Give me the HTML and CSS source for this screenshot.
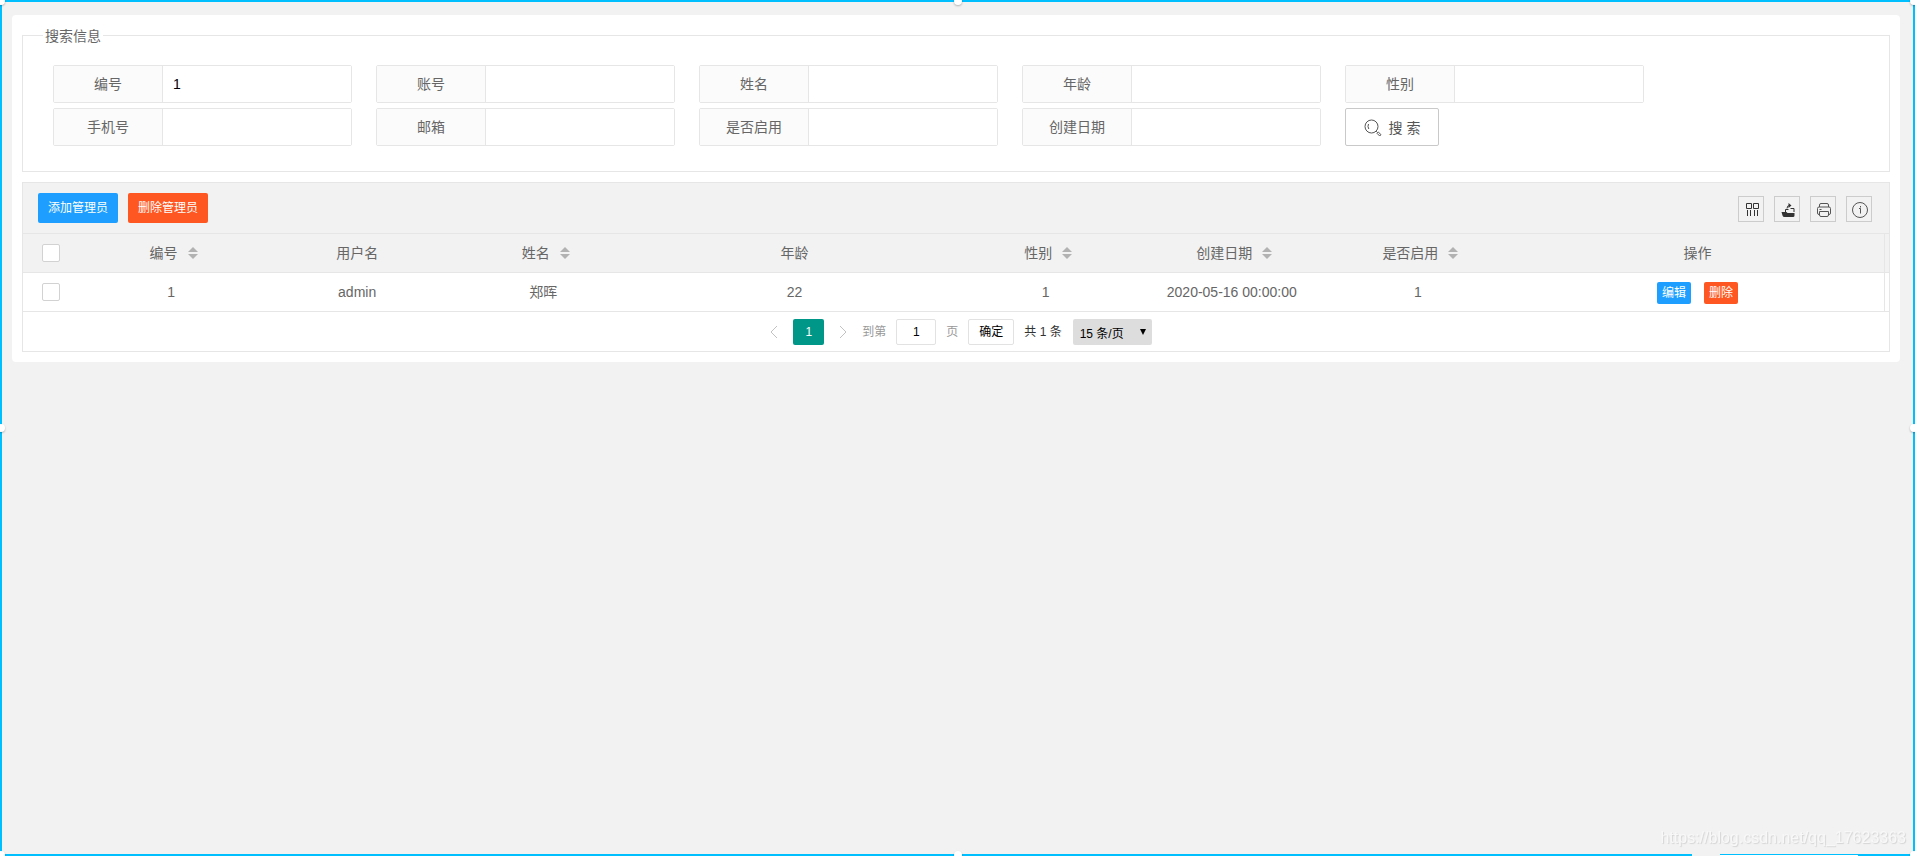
FILE: index.html
```html
<!DOCTYPE html>
<html lang="zh-CN">
<head>
<meta charset="utf-8">
<title>管理员列表</title>
<link rel="stylesheet" href="styles.css">
</head>
<body>
<main class="card">
  <form>
    <fieldset class="search">
      <legend class="search-title">搜索信息</legend>
      <div class="fields">
        <div class="field"><label class="field-label" for="f1">编号</label><input class="field-input" id="f1" type="text" value="1"></div>
        <div class="field"><label class="field-label" for="f2">账号</label><input class="field-input" id="f2" type="text"></div>
        <div class="field"><label class="field-label" for="f3">姓名</label><input class="field-input" id="f3" type="text"></div>
        <div class="field"><label class="field-label" for="f4">年龄</label><input class="field-input" id="f4" type="text"></div>
        <div class="field"><label class="field-label" for="f5">性别</label><input class="field-input" id="f5" type="text"></div>
        <div class="field"><label class="field-label" for="f6">手机号</label><input class="field-input" id="f6" type="text"></div>
        <div class="field"><label class="field-label" for="f7">邮箱</label><input class="field-input" id="f7" type="text"></div>
        <div class="field"><label class="field-label" for="f8">是否启用</label><input class="field-input" id="f8" type="text"></div>
        <div class="field"><label class="field-label" for="f9">创建日期</label><input class="field-input" id="f9" type="text"></div>
        <button class="search-btn" type="button"><svg class="search-icon" viewBox="0 0 18 18"><circle cx="7.5" cy="7.5" r="6.5"/><path d="M4.500 5Q3.300 7.500 4.800 10M12.200 12.200l1.300 1.300M13 14.300l1.300-1.300 2.700 2.700-1.300 1.300z"/></svg>搜 索</button>
      </div>
    </fieldset>
  </form>

  <section class="grid">
    <div class="toolbar">
      <button class="btn blue" type="button">添加管理员</button>
      <button class="btn red" type="button">删除管理员</button>
      <div class="tools">
        <button class="tool" type="button" aria-label="筛选列"><svg class="tool-icon" viewBox="0 0 16 16"><path d="M2.500 1.500h5v5h-5zM9.500 1.500h5v5h-5zM3.500 8v6M6.500 8v6M10.500 8v6M13.500 8v6"/></svg></button>
        <button class="tool" type="button" aria-label="导出"><svg class="tool-icon" viewBox="0 0 16 16"><path d="M5.500 10V7.500h3M10.500 6.500h3.500V10M7 6.500Q7 3.500 9.500 3.500"/><path class="solid" d="M8.500 1l3 2.500-3 2.500zM1.500 10h5l1 1h7v2.500q0 1.500-1.500 1.500H4.500q-1.500 0-2-1.500z"/></svg></button>
        <button class="tool" type="button" aria-label="打印"><svg class="tool-icon thin" viewBox="0 0 16 16"><path d="M3.500 5V3q0-1.500 1.500-1.500h6q1.500 0 1.500 1.500v2M3.500 12.500H3q-1.500 0-1.500-1.500V6.500q0-1.500 1.500-1.500h10q1.500 0 1.500 1.500V11q0 1.500-1.500 1.500h-.5M3.500 9.500h9V13q0 1.500-1.500 1.500H5q-1.500 0-1.500-1.500zM3.500 7.500h2"/></svg></button>
        <button class="tool" type="button" aria-label="提示"><svg class="tool-icon thin" viewBox="0 0 16 16"><circle cx="8" cy="8" r="7.500"/><path d="M7 6.500h1.500v5M8.500 4v1.500"/></svg></button>
      </div>
    </div>
    <div class="table-wrap">
      <table class="table">
        <colgroup><col class="c-check"><col class="c-std"><col class="c-std"><col class="c-std"><col class="c-age"><col class="c-std"><col class="c-std"><col class="c-std"><col></colgroup>
        <thead>
          <tr>
            <th><input class="check" type="checkbox" aria-label="全选"></th>
            <th>编号<span class="sort"></span></th>
            <th>用户名</th>
            <th>姓名<span class="sort"></span></th>
            <th>年龄</th>
            <th>性别<span class="sort"></span></th>
            <th>创建日期<span class="sort"></span></th>
            <th>是否启用<span class="sort"></span></th>
            <th>操作</th>
          </tr>
        </thead>
        <tbody>
          <tr>
            <td><input class="check" type="checkbox" aria-label="选择此行"></td>
            <td>1</td>
            <td>admin</td>
            <td>郑晖</td>
            <td>22</td>
            <td>1</td>
            <td>2020-05-16 00:00:00</td>
            <td>1</td>
            <td><div class="actions"><button class="btn mini blue" type="button">编辑</button><button class="btn mini red" type="button">删除</button></div></td>
          </tr>
        </tbody>
      </table>
    </div>
    <nav class="pager">
      <button class="arrow" type="button" aria-label="上一页"><svg class="arrow-icon" viewBox="0 0 8 14"><path d="M7 1L1 7l6 6"/></svg></button>
      <button class="page" type="button">1</button>
      <button class="arrow next" type="button" aria-label="下一页"><svg class="arrow-icon" viewBox="0 0 8 14"><path d="M1 1l6 6-6 6"/></svg></button>
      <label class="muted" for="goto">到第</label>
      <input class="goto" id="goto" type="text" value="1">
      <span class="muted">页</span>
      <button class="confirm" type="button">确定</button>
      <span class="total">共 1 条</span>
      <span class="limit"><select class="limit-select" aria-label="每页条数"><option>15 条/页</option></select></span>
    </nav>
  </section>
</main>

<div class="frame">
  <i class="handle tl"></i><i class="handle tc"></i><i class="handle tr"></i>
  <i class="handle ml"></i><i class="handle mr"></i>
  <i class="handle bl"></i><i class="handle bc"></i><i class="handle br"></i>
  <i class="gap"></i><i class="gap low"></i>
</div>
<div class="watermark">https://blog.csdn.net/qq_17623363</div>
</body>
</html>
```
FILE: styles.css
```css
* { box-sizing: border-box; }

html { height: 100%; }

body {
  min-height: 100%;
  margin: 0;
  padding: 15px 15px 15px 12px;
  background: #f2f2f2;
  color: #666;
  font: 14px/24px "Liberation Sans", "Noto Sans CJK SC", sans-serif;
}

button, input, select {
  margin: 0;
  padding: 0;
  border: 0;
  font: inherit;
  color: inherit;
}

svg { fill: none; stroke: currentColor; }

.card {
  padding: 10px;
  border-radius: 4px;
  background: #fff;
}

.search {
  min-width: 0;
  margin: 0 0 10px;
  padding: 19px 30px 25px;
  border: 1px solid #e6e6e6;
}

.search-title {
  margin-left: -10px;
  padding: 1px 2px 0;
  line-height: 20px;
}

.fields {
  display: grid;
  grid-template-columns: repeat(auto-fill, 299px);
  gap: 5px 24px;
}

.field {
  display: flex;
  height: 38px;
  border: 1px solid #e6e6e6;
  border-radius: 2px;
}

.field-label {
  flex: none;
  width: 108px;
  background: #fbfbfb;
  line-height: 36px;
  text-align: center;
}

.field-input {
  flex: 1;
  min-width: 0;
  padding-left: 10px;
  border-left: 1px solid #e6e6e6;
  background: #fff;
  color: #000;
}

.search-btn {
  display: flex;
  align-items: center;
  justify-content: center;
  gap: 7px;
  width: 94px;
  height: 38px;
  padding-top: 2px;
  border: 1px solid #c9c9c9;
  border-radius: 2px;
  background: #fff;
  color: #555;
}

.search-icon { width: 18px; height: 18px; }

.grid { border: 1px solid #e6e6e6; }

.toolbar {
  display: flex;
  gap: 10px;
  height: 51px;
  padding: 10px 17px 0 15px;
  border-bottom: 1px solid #e6e6e6;
  background: #f2f2f2;
}

.btn {
  height: 30px;
  padding: 0 10px;
  border-radius: 2px;
  color: #fff;
  font-size: 12px;
  line-height: 30px;
}

.blue { background: #1e9fff; }
.red { background: #ff5722; }

.tools {
  display: flex;
  gap: 10px;
  margin: 3px 0 0 auto;
}

.tool {
  display: flex;
  align-items: center;
  justify-content: center;
  width: 26px;
  height: 26px;
  padding: 2px 0 0 2px;
  border: 1px solid #ccc;
  background: none;
  color: #333;
}

.tool-icon { width: 16px; height: 16px; }
.thin { color: #555; }
.solid { fill: currentColor; stroke: none; }

.table-wrap {
  padding-right: 4px;
  background: linear-gradient(#f2f2f2 38px, #e6e6e6 38px, #e6e6e6 39px, #fff 39px);
  border-bottom: 1px solid #e6e6e6;
}

.table {
  width: 100%;
  table-layout: fixed;
  border-collapse: separate;
  border-spacing: 0;
  border-right: 1px solid #e6e6e6;
}

.c-check { width: 55px; }
.c-std { width: 10%; }
.c-age { width: 17%; }

.table th, .table td {
  height: 38px;
  padding: 0;
  font-weight: 400;
  text-align: center;
}

.table th {
  height: 39px;
  border-bottom: 1px solid #e6e6e6;
}

.check {
  display: block;
  width: 18px;
  height: 18px;
  margin: 0 auto;
  border: 1px solid #d2d2d2;
  border-radius: 2px;
  background: #fff;
  appearance: none;
}

.sort {
  display: inline-grid;
  gap: 2px;
  margin: 0 -5px 2px 10px;
  vertical-align: middle;
}

.sort::before, .sort::after {
  content: "";
  border: 5px solid transparent;
}

.sort::before { border-top: 0; border-bottom-color: #b2b2b2; }
.sort::after { border-bottom: 0; border-top-color: #b2b2b2; }

.actions {
  display: flex;
  justify-content: center;
  gap: 13px;
  padding-top: 1px;
}

.mini {
  height: 22px;
  padding: 0 5px;
  line-height: 22px;
}

.pager {
  display: flex;
  align-items: center;
  justify-content: center;
  height: 39px;
  padding: 0 0 0 10px;
  font-size: 12px;
}

.arrow {
  display: flex;
  width: 8px;
  background: none;
  color: #c2c2c2;
}

.arrow-icon { width: 8px; height: 14px; }

.page {
  width: 31px;
  height: 26px;
  margin: 0 15px;
  border-radius: 2px;
  background: #009688;
  color: #fff;
}

.next { margin-right: 15px; }
.muted { color: #999; }

.goto {
  width: 40px;
  height: 26px;
  margin: 0 10px;
  border: 1px solid #e2e2e2;
  border-radius: 2px;
  color: #000;
  text-align: center;
}

.confirm {
  width: 46px;
  height: 26px;
  margin: 0 10px;
  border: 1px solid #e2e2e2;
  border-radius: 2px;
  background: #fff;
  color: #000;
}

.total { color: #333; }

.limit {
  position: relative;
  margin-left: 11px;
}

.limit::after {
  content: "";
  position: absolute;
  top: 10px;
  right: 6px;
  border: 3px solid transparent;
  border-top: 6px solid #000;
  border-bottom: 0;
  pointer-events: none;
}

.limit-select {
  display: block;
  width: 79px;
  height: 26px;
  padding: 3px 0 0 7px;
  border-radius: 2px;
  background: #ddd;
  color: #000;
  appearance: none;
}

/* Selection outline over the whole window */
.frame {
  position: fixed;
  inset: 0;
  border: 2px solid #00bfff;
  pointer-events: none;
}

.handle {
  position: absolute;
  width: 8px;
  height: 8px;
  border-radius: 50%;
  background: #fff;
  box-shadow: 0 1px 2px #0004;
}

.tl, .tc, .tr { top: -5px; }
.bl, .bc, .br { bottom: -5px; }
.tl, .ml, .bl { left: -5px; }
.tr, .mr, .br { right: -5px; }
.tc, .bc { left: calc(50% - 4px); }
.ml, .mr { top: calc(50% - 4px); }

.gap {
  position: absolute;
  right: 193px;
  bottom: -2px;
  width: 28px;
  height: 2px;
  background: #f2f2f2;
}

.low {
  right: 55px;
  width: 138px;
  height: 1px;
  background: #fff;
}

.watermark {
  position: fixed;
  right: 9px;
  bottom: 9px;
  color: #f8f8f8;
  font-size: 16px;
  line-height: 18px;
  text-shadow: 1px 1px 1px #d4d4d4;
}
```
